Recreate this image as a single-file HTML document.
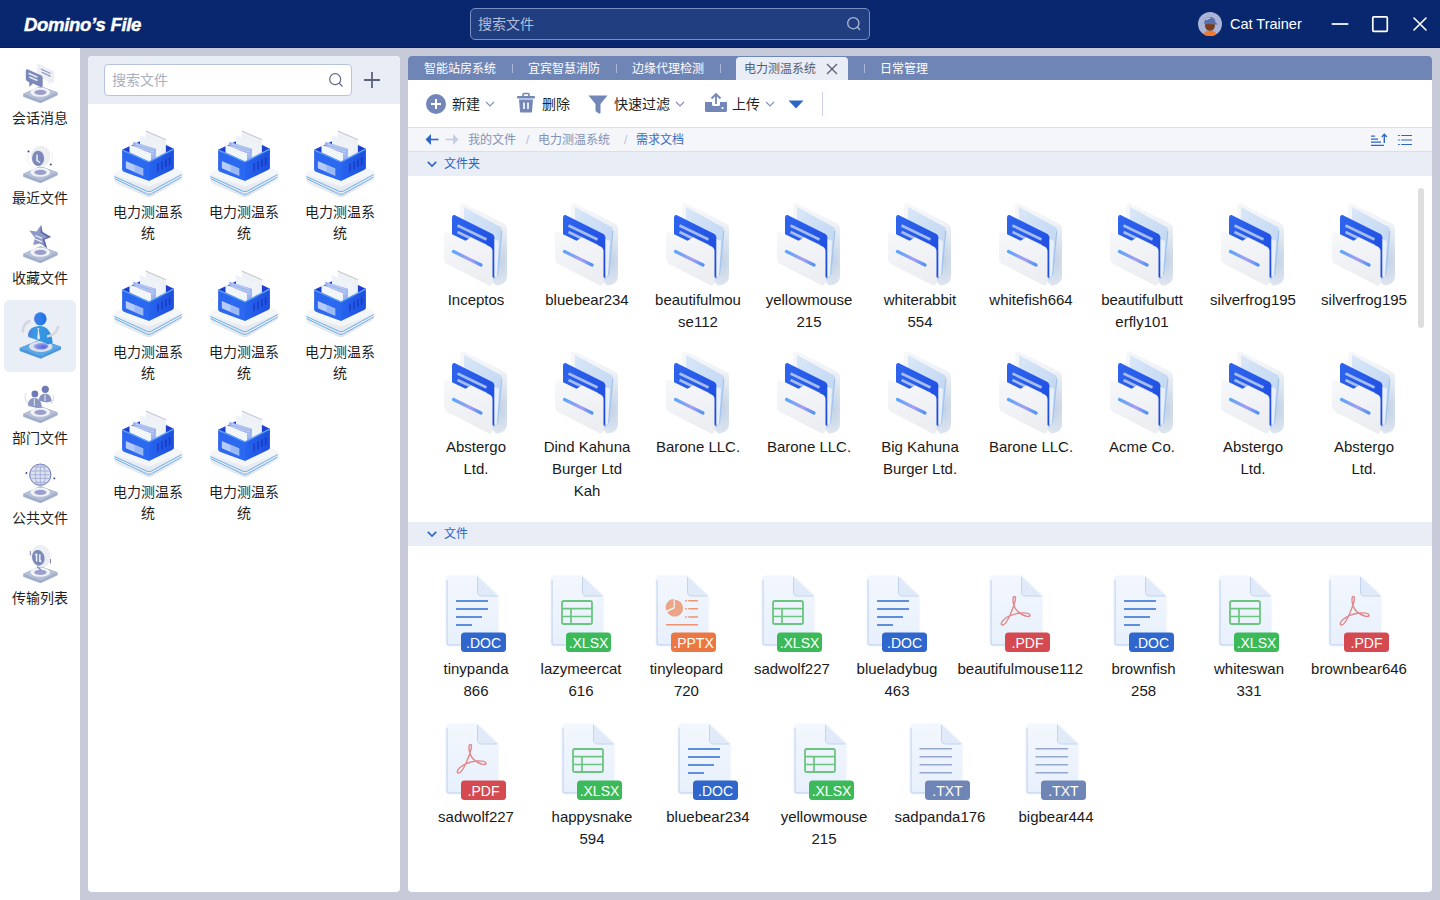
<!DOCTYPE html><html lang="zh-CN"><head><meta charset="utf-8"><style>
*{box-sizing:border-box;margin:0;padding:0}
html,body{width:1440px;height:900px;overflow:hidden;background:#c7cbd9;font-family:"Liberation Sans",sans-serif;color:#1d1d1f}
.a{position:absolute;white-space:nowrap}
svg.a{overflow:visible}
#hdr{position:absolute;left:0;top:0;width:1440px;height:48px;background:#08276e;border-bottom:1px solid #03205f}
#logo{left:24px;top:13px;font-size:18.6px;font-weight:bold;font-style:italic;color:#fff;line-height:24px;letter-spacing:-0.35px;-webkit-text-stroke:0.4px #fff}
#tsearch{position:absolute;left:470px;top:8px;width:400px;height:32px;border:1px solid #7b8fc4;border-radius:5px;background:#213f80}
#side{position:absolute;left:0;top:48px;width:80px;height:852px;background:#fff}
.sel{position:absolute;left:4px;top:300px;width:72px;height:72px;border-radius:5px;background:#eaeef6}
.sl{font-size:14px;line-height:18px;color:#1f1f1f;width:80px;text-align:center;left:0}
#lp{position:absolute;left:88px;top:56px;width:312px;height:836px;background:#fff;border-radius:4px;overflow:hidden}
#lph{position:absolute;left:0;top:0;width:312px;height:48px;background:#e9edf6}
#lsearch{position:absolute;left:104px;top:64px;width:248px;height:32px;border:1px solid #b7c2dc;border-radius:4px;background:#fff}
.ph{font-size:14px;line-height:16px}
.bn{font-size:14px;line-height:21px;color:#1f1f1f;width:96px;text-align:center}
#rp{position:absolute;left:408px;top:56px;width:1024px;height:836px;background:#fff;border-radius:4px;overflow:hidden}
#tabs{position:absolute;left:0;top:0;width:1024px;height:24px;background:#6f85b6}
#acttab{position:absolute;left:328px;top:1px;width:112px;height:23px;background:#e9edf6;border-radius:4px 4px 0 0}
.tb{font-size:12px;line-height:16px;color:#fff}
.tsep{position:absolute;top:64px;width:1px;height:9px;background:#a9b6d6}
#toolbar{position:absolute;left:0;top:24px;width:1024px;height:48px;background:#fff;border-bottom:1px solid #d8e0ef}
.tt{font-size:14px;line-height:20px;color:#1f1f1f}
#crumb{position:absolute;left:0;top:72px;width:1024px;height:24px;background:#f4f6fa;border-bottom:1px solid #d8e0ef}
.cb{font-size:12px;line-height:16px;color:#8492b3}
.sec{position:absolute;left:0;width:1024px;height:24px;background:#e9edf6}
.st{font-size:12px;line-height:16px;color:#2b64c5}
.nm{font-size:15px;line-height:22px;color:#1a1a1a;text-align:center;width:140px}
#sb{position:absolute;left:1418px;top:188px;width:6px;height:140px;border-radius:3px;background:#dedede}
</style></head><body>
<svg width="0" height="0" style="position:absolute"><defs>
<symbol id="folder" viewBox="0 0 72 90">
  <defs>
    <linearGradient id="fgBack" x1="0" y1="0" x2="1" y2="1"><stop offset="0" stop-color="#f6f7f9"/><stop offset="1" stop-color="#eaeef3"/></linearGradient>
    <linearGradient id="fgDoc" x1="0" y1="0" x2="1" y2="1"><stop offset="0" stop-color="#2f66ee"/><stop offset="1" stop-color="#1c49de"/></linearGradient>
    <linearGradient id="fgFront" x1="0" y1="0" x2="0.3" y2="1"><stop offset="0" stop-color="#f7f8fa"/><stop offset="1" stop-color="#eceef2"/></linearGradient>
    <linearGradient id="fgLine" x1="0" y1="0" x2="1" y2="0"><stop offset="0" stop-color="#5aa6fa"/><stop offset="0.6" stop-color="#a79df0"/><stop offset="1" stop-color="#4f93f7"/></linearGradient>
    <linearGradient id="fgSheet" x1="0" y1="0" x2="1" y2="1"><stop offset="0" stop-color="#d9e7f8"/><stop offset="1" stop-color="#bcd3f1"/></linearGradient>
  </defs>
  <radialGradient id="fgShade" cx="0.85" cy="0.7" r="0.45"><stop offset="0" stop-color="#c3d2e6"/><stop offset="1" stop-color="#c3d2e6" stop-opacity="0"/></radialGradient>
  <path d="M20,9 C20,5.5 22,4.5 25,6 L63,25 C66,26.5 67,28 67,31 L67,78 C67,84 62,87.5 56,87.5 L20,50 Z" fill="url(#fgBack)"/>
  <path d="M20,9 C20,5.5 22,4.5 25,6 L63,25 C66,26.5 67,28 67,31 L67,78 C67,84 62,87.5 56,87.5 L20,50 Z" fill="url(#fgShade)"/>
  <path d="M24,9 L60.5,29 C61.5,29.5 62,30.5 62,32 L57.5,77 L54,82 L24,44 Z" fill="url(#fgSheet)"/>
  <path d="M61.8,33 L57.5,77" stroke="#9fc3ef" stroke-width="1.2"/>
  <path d="M12,20 C12,17.5 13.5,16.5 15.5,17.5 L51.5,35.5 C53.5,36.5 54.5,38 54.5,40.5 L54.5,80 L12,60 Z" fill="url(#fgDoc)"/>
  <path d="M17.5,27.5 L46.5,41.5" stroke="#a6bdf0" stroke-width="2.6"/>
  <path d="M17.5,34 L46.5,48" stroke="#a6bdf0" stroke-width="2.6"/>
  <path d="M54.5,41 L59,43 L57,77 L54.5,79.5 Z" fill="#eaf0f9"/>
  <path d="M4,37 C4,34 5.5,33 8,34.2 L25.5,42.8 L31,39.5 L49.5,48.5 C51.5,49.5 52.5,51 52.5,53.5 L52.5,84 C52.5,87 50.5,88.3 48,87 L8,66.5 C5.3,65.2 4,63.5 4,60.5 Z" fill="url(#fgFront)"/>
  <path d="M13.5,53.5 L41,67" stroke="url(#fgLine)" stroke-width="3.2" stroke-linecap="round"/>
</symbol>

<symbol id="basket" viewBox="0 0 76 74">
  <defs>
    <linearGradient id="bkL" x1="0" y1="0" x2="1" y2="1"><stop offset="0" stop-color="#2e66ee"/><stop offset="1" stop-color="#2a6af2"/></linearGradient>
    <linearGradient id="bkR" x1="0" y1="0" x2="1" y2="0"><stop offset="0" stop-color="#2764ee"/><stop offset="1" stop-color="#1f4fdc"/></linearGradient>
    <linearGradient id="bkSide" x1="0" y1="0" x2="0" y2="1"><stop offset="0" stop-color="#eef1f5"/><stop offset="1" stop-color="#e2e6ec"/></linearGradient>
  </defs>
  <path d="M4.2,47.5 L4.7,54.6 C4.8,56 5.5,57 7,57.7 L36,70.5 C37.5,71.2 40.5,71.2 42,70.5 L69.5,55 C71,54.2 71.8,53 71.8,51.5 L71.8,45.6 L39,59.5 Z" fill="url(#bkSide)"/>
  <path d="M4.3,50.5 L36.5,65 C38,65.7 40,65.7 41.5,65 L71.8,48.5" stroke="#5fa8ec" stroke-width="0.9" fill="none"/>
  <path d="M4.5,52.6 L36.5,67.8 C38,68.5 40,68.5 41.5,67.8 L71.8,51" stroke="#5fa8ec" stroke-width="0.9" fill="none"/>
  <path d="M7,45 L34,32.5 C36.5,31.4 40,31.4 42.5,32.5 L69.5,44 C72.5,45.3 72.5,47 69.5,48.5 L42,59.5 C40,60.4 37.5,60.4 35.5,59.5 L7,49.5 C3.8,48.2 3.8,46.5 7,45 Z" fill="#f5f6f8"/>
  <path d="M12.1,23.7 L37,12 C38.5,11.3 40,11.3 41.5,12 L63.9,22.7 L39,35.4 Z" fill="#1d3fcf"/>
  <path d="M35.9,5 L55.9,13.7 L55.9,40 L35.9,32 Z" fill="#edf1f5"/>
  <path d="M35.9,5 L55.9,13.7" stroke="#b8bcc6" stroke-width="0.9"/>
  <path d="M30,9 L51.2,17.4 L51.2,42 L30,34 Z" fill="#eef3f7"/>
  <path d="M23.2,15.8 L45.9,22.7 L45.9,44 L23.2,36 Z" fill="#9fb4ee"/>
  <path d="M26,18 L44,23.5 M26,20.5 L44,26 M26,23 L44,28.5" stroke="#c9d6f6" stroke-width="0.8"/>
  <path d="M19.5,18.5 L41,27.4 L41,46 L19.5,38 Z" fill="#f3f6f9"/>
  <path d="M12.1,25 C12.1,23.8 12.8,23.4 14,23.9 L39,35.4 L39,55.1 L14.5,46 C12.9,45.4 12.1,44.4 12.1,43 Z" fill="url(#bkL)"/>
  <path d="M39,35.4 L62.5,23.3 C63.5,22.8 63.9,23.3 63.9,24.5 L63.9,41.5 C63.9,42.7 63.2,43.5 62,44 L39,55.1 Z" fill="url(#bkR)"/>
  <path d="M12.5,24.2 L39,36 L63.5,23.2" stroke="#5aa2f5" stroke-width="1.3" fill="none" stroke-linejoin="round"/>
  <path d="M15.8,35 L33.2,42.5 L33.2,49.8 L15.8,42.3 Z" fill="#c5d7f7" opacity="0.9"/>
  <path d="M24.5,38.8 L33.2,42.5 L33.2,49.8 L24.5,46 Z" fill="#97b6f2" opacity="0.9"/>
  <path d="M48,37.5 L48,45.3 M52,35.5 L52,43.2 M55.7,33.2 L55.7,40.9 M59.6,31.3 L59.6,39" stroke="#1639c4" stroke-width="1.3"/>
</symbol>
<symbol id="s_chat" viewBox="0 0 48 48">
  <path d="M7.2,33.8 L24.5,26.3 L41.6,32.3 L41.6,35.3 L24.5,43.3 L7.2,36.8 Z" fill="#a2afc9"/>
  <path d="M7.2,33.8 L24.5,26.3 L41.6,32.3 L24.5,40.3 Z" fill="#b5c0d7"/>
  <ellipse cx="24.2" cy="32.2" rx="9.8" ry="4.5" fill="#f1f3f6"/>
  <ellipse cx="24.4" cy="32.4" rx="6" ry="2.7" fill="#9c9fcc"/>

  <path d="M21.3,5.5 C21.3,4.2 22.2,3.6 23.5,4.2 L36.5,10.5 C37.6,11 38.2,11.8 38.2,13 L38.2,21.5 C38.2,22.6 37.3,23.2 36.3,22.7 L35,22.2 L33.8,25.3 L31.5,21 L23.2,17 C22,16.5 21.3,15.6 21.3,14.4 Z" fill="#edeff3"/>
  <path d="M25,9 L34.5,13.5 M25.5,12 L34.5,16.3" stroke="#8f98c8" stroke-width="1.3"/>
  <path d="M9.8,11 C9.8,9.7 10.8,9 12,9.5 L24.8,15.3 C26,15.8 26.7,16.7 26.7,18 L26.7,25.5 C26.7,26.8 25.7,27.4 24.5,26.9 L17,23.6 L13.3,27.1 L13.3,22.2 L11.8,21.5 C10.5,20.9 9.8,20 9.8,18.8 Z" fill="#7b88ba"/>
  <path d="M12.5,13.3 L21.5,17.3 M13.3,17 L21.5,20.6" stroke="#e4e8f2" stroke-width="1.6"/>
</symbol><symbol id="s_clock" viewBox="0 0 48 48">
  <path d="M7.2,33.8 L24.5,26.3 L41.6,32.3 L41.6,35.3 L24.5,43.3 L7.2,36.8 Z" fill="#a2afc9"/>
  <path d="M7.2,33.8 L24.5,26.3 L41.6,32.3 L24.5,40.3 Z" fill="#b5c0d7"/>
  <ellipse cx="24.2" cy="32.2" rx="9.8" ry="4.5" fill="#f1f3f6"/>
  <ellipse cx="24.4" cy="32.4" rx="6" ry="2.7" fill="#9c9fcc"/>

  <ellipse cx="24.7" cy="16.3" rx="9.8" ry="10.6" fill="#eceef2"/>
  <ellipse cx="22.1" cy="18.4" rx="6.1" ry="7.7" fill="#7c89bb"/>
  <path d="M21,14.5 L21,20.5 L24,22.5" stroke="#eef0f6" stroke-width="1.5" fill="none"/>
  <path d="M11.5,14 C10.5,18 12,23 15,25 M35,12 C37,15 37,21 35,24" stroke="#e5e7ec" stroke-width="0.7" fill="none"/>
  <circle cx="12.5" cy="11.5" r="1" fill="#3b3f8a"/><circle cx="34.7" cy="24.5" r="1" fill="#3b3f8a"/>
</symbol><symbol id="s_star" viewBox="0 0 48 48">
  <path d="M7.2,33.8 L24.5,26.3 L41.6,32.3 L41.6,35.3 L24.5,43.3 L7.2,36.8 Z" fill="#a2afc9"/>
  <path d="M7.2,33.8 L24.5,26.3 L41.6,32.3 L24.5,40.3 Z" fill="#b5c0d7"/>
  <ellipse cx="24.2" cy="32.2" rx="9.8" ry="4.5" fill="#f1f3f6"/>
  <ellipse cx="24.4" cy="32.4" rx="6" ry="2.7" fill="#9c9fcc"/>

  <path d="M25,5 L26.5,12 L35,17 L28.5,19.5 L31,28.3 L24,23.5 L17,25 L19,18 L13.3,10.4 L20.5,11.5 Z" fill="#8e98c6"/>
  <path d="M25,5 L26.5,12 L35,17 L28.5,19.5 L31,28.3 L28.5,26 L27,19 L31.5,17 L24.5,12.5 Z" fill="#5d68ad"/>
  <path d="M19.2,15.5 L26,18.3 M19.2,19 L26,21.8" stroke="#eef0f8" stroke-width="1.3"/>
</symbol><symbol id="s_dept" viewBox="0 0 48 48">
  <path d="M7.2,33.8 L24.5,26.3 L41.6,32.3 L41.6,35.3 L24.5,43.3 L7.2,36.8 Z" fill="#a2afc9"/>
  <path d="M7.2,33.8 L24.5,26.3 L41.6,32.3 L24.5,40.3 Z" fill="#b5c0d7"/>
  <ellipse cx="24.2" cy="32.2" rx="9.8" ry="4.5" fill="#f1f3f6"/>
  <ellipse cx="24.4" cy="32.4" rx="6" ry="2.7" fill="#9c9fcc"/>

  <path d="M10,13 C8.5,17 9.5,21 12,23.5 M37,15 C38.5,18 37.5,22 34.5,24" stroke="#e3e5ea" stroke-width="1.5" fill="none"/>
  <circle cx="29.3" cy="9.3" r="3.6" fill="#6e7cb6"/>
  <path d="M23,20 C23,16 25.5,13.8 29.5,13.8 C33,13.8 35.3,16.5 35.7,21.3 L31,22.5 L23.5,21 Z" fill="#8794c2"/>
  <path d="M28.5,14.5 L29.5,14.5 L29.5,21 L28.5,21 Z" fill="#e8eaf2"/>
  <circle cx="18.9" cy="13.9" r="3.4" fill="#6e7cb6"/>
  <path d="M12,25 C12,20.5 14.5,17.9 18.5,17.9 C22.5,17.9 25.5,21 26,27.7 L21,28 L12.5,26 Z" fill="#8c98c4"/>
  <path d="M17.8,18.5 L18.8,18.5 L18.8,26 L17.8,26 Z" fill="#e8eaf2"/>
</symbol><symbol id="s_globe" viewBox="0 0 48 48">
  <path d="M7.2,33.8 L24.5,26.3 L41.6,32.3 L41.6,35.3 L24.5,43.3 L7.2,36.8 Z" fill="#a2afc9"/>
  <path d="M7.2,33.8 L24.5,26.3 L41.6,32.3 L24.5,40.3 Z" fill="#b5c0d7"/>
  <ellipse cx="24.2" cy="32.2" rx="9.8" ry="4.5" fill="#f1f3f6"/>
  <ellipse cx="24.4" cy="32.4" rx="6" ry="2.7" fill="#9c9fcc"/>

  <circle cx="24.3" cy="14.7" r="11" fill="#dde2ef"/>
  <circle cx="24.3" cy="14.7" r="10.6" fill="none" stroke="#6c78b6" stroke-width="1"/>
  <path d="M14,11 L34.5,11 M13.7,14.7 L35,14.7 M14,18.4 L34.5,18.4 M17,7 L31.5,7 M17,22.4 L31.5,22.4" stroke="#9ba6d2" stroke-width="0.8"/>
  <ellipse cx="24.3" cy="14.7" rx="5" ry="10.6" fill="none" stroke="#9ba6d2" stroke-width="0.8"/>
  <path d="M24.3,4 L24.3,25.3" stroke="#9ba6d2" stroke-width="0.8"/>
  <path d="M10.5,12 C11,16 13,19 15,20 M38,17 C37.5,19 36,21 33,22" stroke="#e3e5ea" stroke-width="0.6" fill="none"/>
  <circle cx="10.4" cy="13" r="0.9" fill="#3b3f8a"/><circle cx="38.4" cy="18.4" r="0.9" fill="#3b3f8a"/>
</symbol><symbol id="s_trans" viewBox="0 0 48 48">
  <path d="M7.2,33.8 L24.5,26.3 L41.6,32.3 L41.6,35.3 L24.5,43.3 L7.2,36.8 Z" fill="#a2afc9"/>
  <path d="M7.2,33.8 L24.5,26.3 L41.6,32.3 L24.5,40.3 Z" fill="#b5c0d7"/>
  <ellipse cx="24.2" cy="32.2" rx="9.8" ry="4.5" fill="#f1f3f6"/>
  <ellipse cx="24.4" cy="32.4" rx="6" ry="2.7" fill="#9c9fcc"/>

  <ellipse cx="25" cy="16" rx="9.6" ry="11.4" fill="#eceef2" transform="rotate(-18 25 16)"/>
  <ellipse cx="22.3" cy="17.8" rx="6.2" ry="7.9" fill="#7c89bb" transform="rotate(-12 22.3 17.8)"/>
  <path d="M20.6,13.8 L20.6,21.5 M23.8,14.3 L23.8,22 M19.2,15.3 L20.6,13.8 M23.8,22 L25.2,20.5" stroke="#eef0f6" stroke-width="1.5" fill="none"/>
  <path d="M14.3,11 L14.3,15.5 M34.5,19 L34.5,23.5" stroke="#6f78b0" stroke-width="0.9"/>
  <path d="M21,26.5 L25,30" stroke="#7c89bb" stroke-width="1.2"/>
</symbol><symbol id="s_person" viewBox="0 0 56 60">
  <defs>
    <radialGradient id="prIn" cx="0.65" cy="0.6" r="0.7"><stop offset="0" stop-color="#5a5fe0"/><stop offset="1" stop-color="#9fb0ee"/></radialGradient>
    <linearGradient id="prBody" x1="0" y1="0" x2="1" y2="0"><stop offset="0" stop-color="#4d7de2"/><stop offset="0.25" stop-color="#3a9ae2"/><stop offset="1" stop-color="#2f8fe0"/></linearGradient>
    <linearGradient id="prHead" x1="0" y1="0" x2="1" y2="0"><stop offset="0" stop-color="#5575e0"/><stop offset="0.35" stop-color="#3380e8"/><stop offset="1" stop-color="#1d6fe6"/></linearGradient>
  </defs>
  <path d="M7.7,42 L28.7,33.3 L49,40.7 L49,43.5 L28.7,52.7 L7.7,45 Z" fill="#4c97dc"/>
  <path d="M7.7,42 L28.7,33.3 L49,40.7 L28.7,50 Z" fill="#5ea8e6"/>
  <ellipse cx="28.7" cy="40.5" rx="11.7" ry="5.4" fill="#dde2ea"/>
  <ellipse cx="29" cy="40.3" rx="7.2" ry="3.3" fill="url(#prIn)"/>
  <path d="M16,30 C16,23.5 21,20 27.5,20 C34.5,20 40,25.5 40.7,37 L36,38.5 L28,35 L16.5,31 Z" fill="url(#prBody)"/>
  <ellipse cx="28.3" cy="12.8" rx="6.3" ry="6.6" fill="url(#prHead)"/>
  <path d="M25,22.5 L27.5,22 L26.8,24 L28,32 L26.5,34 L25.2,32 L26,24 Z" fill="#e4e7ee"/>
  <path d="M18.5,14.5 C13,16.5 10.5,21 11,26.5" stroke="#d3d6dc" stroke-width="2.6" fill="none"/>
  <path d="M46,20 C46,25 42,29.5 35,30.5" stroke="#d6d8dd" stroke-width="2.6" fill="none"/>
</symbol><filter id="pgBlur" x="-20%" y="-20%" width="140%" height="140%"><feGaussianBlur stdDeviation="1.2"/></filter><symbol id="f_doc" viewBox="0 0 72 86">
  <defs><linearGradient id="pg_f_doc" x1="0" y1="0" x2="0" y2="1"><stop offset="0" stop-color="#f3f7fe"/><stop offset="1" stop-color="#e7f0fc"/></linearGradient></defs>
  <path d="M6.5,9 C6.5,7.3 7.3,6.5 9,6.5 L37.5,6.5 L58,26 L58,73 C58,74.7 57.2,75.5 55.5,75.5 L9,75.5 C7.3,75.5 6.5,74.7 6.5,73 Z" fill="#c9d6ee" opacity="0.55" filter="url(#pgBlur)"/>
  <path d="M6.5,9 C6.5,7.3 7.3,6.5 9,6.5 L37.5,6.5 L58,26 L58,73 C58,74.7 57.2,75.5 55.5,75.5 L9,75.5 C7.3,75.5 6.5,74.7 6.5,73 Z" fill="url(#pg_f_doc)"/>
  <path d="M7.1,10 L7.1,73 C7.1,74.2 7.8,74.9 9,74.9 L56,74.9" stroke="#c6d8f3" stroke-width="1.2" fill="none"/>
  <path d="M37.5,6.5 L37.5,22 C37.5,24.5 39,26 41.5,26 L58,26 Z" fill="#e1eaf8"/>
  <path d="M37.5,7 L37.5,22 C37.5,24.5 39,26 41.5,26 L57.5,26" stroke="#c4d4ee" stroke-width="1" fill="none"/>
  <path d="M16,31 L48,31 M16,39 L48,39 M16,47 L42,47 M16,55 L32,55" stroke="#5d8fdd" stroke-width="2"/>
  <rect x="21" y="62.5" width="45" height="19.5" rx="3.5" fill="#2f67cc"/>
  <text x="43.5" y="77.5" text-anchor="middle" font-family="Liberation Sans, sans-serif" font-size="14" fill="#fff">.DOC</text>
</symbol><symbol id="f_xls" viewBox="0 0 72 86">
  <defs><linearGradient id="pg_f_xls" x1="0" y1="0" x2="0" y2="1"><stop offset="0" stop-color="#f3f7fe"/><stop offset="1" stop-color="#e7f0fc"/></linearGradient></defs>
  <path d="M6.5,9 C6.5,7.3 7.3,6.5 9,6.5 L37.5,6.5 L58,26 L58,73 C58,74.7 57.2,75.5 55.5,75.5 L9,75.5 C7.3,75.5 6.5,74.7 6.5,73 Z" fill="#c9d6ee" opacity="0.55" filter="url(#pgBlur)"/>
  <path d="M6.5,9 C6.5,7.3 7.3,6.5 9,6.5 L37.5,6.5 L58,26 L58,73 C58,74.7 57.2,75.5 55.5,75.5 L9,75.5 C7.3,75.5 6.5,74.7 6.5,73 Z" fill="url(#pg_f_xls)"/>
  <path d="M7.1,10 L7.1,73 C7.1,74.2 7.8,74.9 9,74.9 L56,74.9" stroke="#c6d8f3" stroke-width="1.2" fill="none"/>
  <path d="M37.5,6.5 L37.5,22 C37.5,24.5 39,26 41.5,26 L58,26 Z" fill="#e1eaf8"/>
  <path d="M37.5,7 L37.5,22 C37.5,24.5 39,26 41.5,26 L57.5,26" stroke="#c4d4ee" stroke-width="1" fill="none"/>
  <rect x="17" y="31" width="30" height="23" rx="1.8" fill="none" stroke="#6cc57e" stroke-width="1.8"/><path d="M17,38.7 L47,38.7 M17,46.5 L47,46.5 M26,38.7 L26,54" stroke="#6cc57e" stroke-width="1.7"/>
  <rect x="21" y="62.5" width="45" height="19.5" rx="3.5" fill="#3cba59"/>
  <text x="43.5" y="77.5" text-anchor="middle" font-family="Liberation Sans, sans-serif" font-size="14" fill="#fff">.XLSX</text>
</symbol><symbol id="f_ppt" viewBox="0 0 72 86">
  <defs><linearGradient id="pg_f_ppt" x1="0" y1="0" x2="0" y2="1"><stop offset="0" stop-color="#f3f7fe"/><stop offset="1" stop-color="#e7f0fc"/></linearGradient></defs>
  <path d="M6.5,9 C6.5,7.3 7.3,6.5 9,6.5 L37.5,6.5 L58,26 L58,73 C58,74.7 57.2,75.5 55.5,75.5 L9,75.5 C7.3,75.5 6.5,74.7 6.5,73 Z" fill="#c9d6ee" opacity="0.55" filter="url(#pgBlur)"/>
  <path d="M6.5,9 C6.5,7.3 7.3,6.5 9,6.5 L37.5,6.5 L58,26 L58,73 C58,74.7 57.2,75.5 55.5,75.5 L9,75.5 C7.3,75.5 6.5,74.7 6.5,73 Z" fill="url(#pg_f_ppt)"/>
  <path d="M7.1,10 L7.1,73 C7.1,74.2 7.8,74.9 9,74.9 L56,74.9" stroke="#c6d8f3" stroke-width="1.2" fill="none"/>
  <path d="M37.5,6.5 L37.5,22 C37.5,24.5 39,26 41.5,26 L58,26 Z" fill="#e1eaf8"/>
  <path d="M37.5,7 L37.5,22 C37.5,24.5 39,26 41.5,26 L57.5,26" stroke="#c4d4ee" stroke-width="1" fill="none"/>
  <path d="M24.8,38.2 L24.8,29.8 A8.4,8.4 0 1 1 17.2,42 Z" fill="#eda587"/><path d="M23.6,37.2 L16.3,40.6 A8.4,8.4 0 0 1 23.6,29 Z" fill="#eda587"/><path d="M35.2,30.7 L36.8,30.7 M35.2,38.7 L36.8,38.7 M35.2,46.9 L36.8,46.9 M38.3,30.7 L48,30.7 M38.3,38.7 L48,38.7 M38.3,46.9 L48,46.9 M16,54.8 L48,54.8" stroke="#ee9470" stroke-width="1.5"/>
  <rect x="21" y="62.5" width="45" height="19.5" rx="3.5" fill="#eb7843"/>
  <text x="43.5" y="77.5" text-anchor="middle" font-family="Liberation Sans, sans-serif" font-size="14" fill="#fff">.PPTX</text>
</symbol><symbol id="f_pdf" viewBox="0 0 72 86">
  <defs><linearGradient id="pg_f_pdf" x1="0" y1="0" x2="0" y2="1"><stop offset="0" stop-color="#f3f7fe"/><stop offset="1" stop-color="#e7f0fc"/></linearGradient></defs>
  <path d="M6.5,9 C6.5,7.3 7.3,6.5 9,6.5 L37.5,6.5 L58,26 L58,73 C58,74.7 57.2,75.5 55.5,75.5 L9,75.5 C7.3,75.5 6.5,74.7 6.5,73 Z" fill="#c9d6ee" opacity="0.55" filter="url(#pgBlur)"/>
  <path d="M6.5,9 C6.5,7.3 7.3,6.5 9,6.5 L37.5,6.5 L58,26 L58,73 C58,74.7 57.2,75.5 55.5,75.5 L9,75.5 C7.3,75.5 6.5,74.7 6.5,73 Z" fill="url(#pg_f_pdf)"/>
  <path d="M7.1,10 L7.1,73 C7.1,74.2 7.8,74.9 9,74.9 L56,74.9" stroke="#c6d8f3" stroke-width="1.2" fill="none"/>
  <path d="M37.5,6.5 L37.5,22 C37.5,24.5 39,26 41.5,26 L58,26 Z" fill="#e1eaf8"/>
  <path d="M37.5,7 L37.5,22 C37.5,24.5 39,26 41.5,26 L57.5,26" stroke="#c4d4ee" stroke-width="1" fill="none"/>
  <path d="M30.5,26.5 C28.5,26.5 28.8,31 29.5,34 C30.5,38 33,42 38,44.5 C41,46 45.5,47.5 46,45.5 C46.5,43.5 42,42.5 37,43 C31,43.6 24,46 20,49.5 C17,52 16.5,55 18.5,55 C20.5,55 23.5,51 26.5,44 C29,38 31.5,31 31.5,28 C31.5,27 31,26.5 30.5,26.5 Z" fill="none" stroke="#e0898d" stroke-width="1.4"/>
  <rect x="21" y="62.5" width="45" height="19.5" rx="3.5" fill="#d54a50"/>
  <text x="43.5" y="77.5" text-anchor="middle" font-family="Liberation Sans, sans-serif" font-size="14" fill="#fff">.PDF</text>
</symbol><symbol id="f_txt" viewBox="0 0 72 86">
  <defs><linearGradient id="pg_f_txt" x1="0" y1="0" x2="0" y2="1"><stop offset="0" stop-color="#f3f7fe"/><stop offset="1" stop-color="#e7f0fc"/></linearGradient></defs>
  <path d="M6.5,9 C6.5,7.3 7.3,6.5 9,6.5 L37.5,6.5 L58,26 L58,73 C58,74.7 57.2,75.5 55.5,75.5 L9,75.5 C7.3,75.5 6.5,74.7 6.5,73 Z" fill="#c9d6ee" opacity="0.55" filter="url(#pgBlur)"/>
  <path d="M6.5,9 C6.5,7.3 7.3,6.5 9,6.5 L37.5,6.5 L58,26 L58,73 C58,74.7 57.2,75.5 55.5,75.5 L9,75.5 C7.3,75.5 6.5,74.7 6.5,73 Z" fill="url(#pg_f_txt)"/>
  <path d="M7.1,10 L7.1,73 C7.1,74.2 7.8,74.9 9,74.9 L56,74.9" stroke="#c6d8f3" stroke-width="1.2" fill="none"/>
  <path d="M37.5,6.5 L37.5,22 C37.5,24.5 39,26 41.5,26 L58,26 Z" fill="#e1eaf8"/>
  <path d="M37.5,7 L37.5,22 C37.5,24.5 39,26 41.5,26 L57.5,26" stroke="#c4d4ee" stroke-width="1" fill="none"/>
  <path d="M15.5,30.8 L48,30.8 M15.5,38.8 L48,38.8 M15.5,46.8 L48,46.8 M15.5,54.8 L48,54.8" stroke="#97a8d0" stroke-width="1.6"/>
  <rect x="21" y="62.5" width="45" height="19.5" rx="3.5" fill="#6f85b6"/>
  <text x="43.5" y="77.5" text-anchor="middle" font-family="Liberation Sans, sans-serif" font-size="14" fill="#fff">.TXT</text>
</symbol></defs></svg>
<div id="hdr"></div>
<div id="logo" class="a">Domino’s File</div>
<div id="tsearch"></div>
<div class="a ph" style="left:478px;top:16px;color:#b3bddb">搜索文件</div>
<svg class="a" style="left:845px;top:15px" width="16" height="16" viewBox="0 0 16 16"><circle cx="8.3" cy="8.2" r="5.6" fill="none" stroke="#aeb9db" stroke-width="1.3"/><path d="M12.4,12.3 L14.6,14.5" stroke="#aeb9db" stroke-width="1.3" stroke-linecap="round"/></svg>
<svg class="a" style="left:1198px;top:12px" width="24" height="24" viewBox="0 0 24 24">
<circle cx="12" cy="12" r="12" fill="#aab4d8"/>
<clipPath id="avc"><circle cx="12" cy="12" r="12"/></clipPath>
<g clip-path="url(#avc)">
<path d="M5,24 C6,19.5 9,18.5 12,18.5 C15,18.5 18,19.5 19,24 Z" fill="#f07a35"/>
<ellipse cx="12" cy="13.5" rx="5" ry="5.2" fill="#7a3d1d"/>
<path d="M6.3,11.5 C6.3,7 9,5 12,5 C15.5,5 17.5,7.5 17.5,10.5 L20,12.5 L6.5,12 Z" fill="#5a6fa8"/>
<path d="M8,8 C9,6.5 11,6 12.5,6.2" stroke="#c9d3f0" stroke-width="1.2" fill="none"/>
</g></svg>
<div class="a" style="left:1230px;top:15px;font-size:14.5px;line-height:18px;color:#fff">Cat Trainer</div>
<svg class="a" style="left:1330px;top:14px" width="100" height="20" viewBox="0 0 100 20"><path d="M1.7,10 L18.3,10" stroke="#dfe3ef" stroke-width="2"/><rect x="42.8" y="2.8" width="14.5" height="14.5" rx="1" fill="none" stroke="#fff" stroke-width="1.7"/><path d="M84,4 L96,16 M96,4 L84,16" stroke="#fff" stroke-width="1.6" stroke-linecap="round"/></svg>
<div id="side"></div>
<div class="sel"></div>
<svg class="a" style="left:16px;top:60px" width="48" height="48"><use href="#s_chat"/></svg>
<div class="a sl" style="top:109px">会话消息</div>
<svg class="a" style="left:16px;top:140px" width="48" height="48"><use href="#s_clock"/></svg>
<div class="a sl" style="top:189px">最近文件</div>
<svg class="a" style="left:16px;top:220px" width="48" height="48"><use href="#s_star"/></svg>
<div class="a sl" style="top:269px">收藏文件</div>
<svg class="a" style="left:12px;top:306px" width="56" height="60"><use href="#s_person"/></svg>
<svg class="a" style="left:16px;top:380px" width="48" height="48"><use href="#s_dept"/></svg>
<div class="a sl" style="top:429px">部门文件</div>
<svg class="a" style="left:16px;top:460px" width="48" height="48"><use href="#s_globe"/></svg>
<div class="a sl" style="top:509px">公共文件</div>
<svg class="a" style="left:16px;top:540px" width="48" height="48"><use href="#s_trans"/></svg>
<div class="a sl" style="top:589px">传输列表</div>
<div id="lp"><div id="lph"></div></div>
<div id="lsearch"></div>
<div class="a ph" style="left:112px;top:72px;color:#a8afbf">搜索文件</div>
<svg class="a" style="left:327px;top:71px" width="16" height="16" viewBox="0 0 16 16"><circle cx="8.2" cy="8.2" r="5.5" fill="none" stroke="#5d6788" stroke-width="1.2"/><path d="M12.2,12.2 L15,15" stroke="#5d6788" stroke-width="1.2" stroke-linecap="round"/></svg>
<svg class="a" style="left:362px;top:70px" width="20" height="20" viewBox="0 0 20 20"><path d="M10,2 L10,18 M2,10 L18,10" stroke="#5a6379" stroke-width="1.8"/></svg>
<svg class="a" style="left:110px;top:126px" width="76" height="74"><use href="#basket"/></svg>
<div class="a bn" style="left:100px;top:202px">电力测温系<br>统</div>
<svg class="a" style="left:206px;top:126px" width="76" height="74"><use href="#basket"/></svg>
<div class="a bn" style="left:196px;top:202px">电力测温系<br>统</div>
<svg class="a" style="left:302px;top:126px" width="76" height="74"><use href="#basket"/></svg>
<div class="a bn" style="left:292px;top:202px">电力测温系<br>统</div>
<svg class="a" style="left:110px;top:266px" width="76" height="74"><use href="#basket"/></svg>
<div class="a bn" style="left:100px;top:342px">电力测温系<br>统</div>
<svg class="a" style="left:206px;top:266px" width="76" height="74"><use href="#basket"/></svg>
<div class="a bn" style="left:196px;top:342px">电力测温系<br>统</div>
<svg class="a" style="left:302px;top:266px" width="76" height="74"><use href="#basket"/></svg>
<div class="a bn" style="left:292px;top:342px">电力测温系<br>统</div>
<svg class="a" style="left:110px;top:406px" width="76" height="74"><use href="#basket"/></svg>
<div class="a bn" style="left:100px;top:482px">电力测温系<br>统</div>
<svg class="a" style="left:206px;top:406px" width="76" height="74"><use href="#basket"/></svg>
<div class="a bn" style="left:196px;top:482px">电力测温系<br>统</div>
<div id="rp"><div id="tabs"></div><div id="toolbar"></div><div id="crumb"></div><div class="sec" style="top:96px"></div><div class="sec" style="top:466px"></div></div>
<div class="a" style="left:736px;top:57px;width:112px;height:23px;background:#e9edf6;border-radius:4px 4px 0 0"></div>
<div class="a tb" style="left:424px;top:61px">智能站房系统</div>
<div class="a tb" style="left:528px;top:61px">宜宾智慧消防</div>
<div class="a tb" style="left:632px;top:61px">边缘代理检测</div>
<div class="a tb" style="left:880px;top:61px">日常管理</div>
<div class="a tb" style="left:744px;top:61px;color:#555d72">电力测温系统</div>
<svg class="a" style="left:826px;top:63px" width="12" height="12" viewBox="0 0 12 12"><path d="M1,1 L11,11 M11,1 L1,11" stroke="#555d72" stroke-width="1.2"/></svg>
<div class="tsep" style="left:512px"></div>
<div class="tsep" style="left:616px"></div>
<div class="tsep" style="left:720px"></div>
<div class="tsep" style="left:864px"></div>
<svg class="a" style="left:426px;top:94px" width="20" height="20" viewBox="0 0 20 20"><circle cx="10" cy="10" r="10" fill="#7286b8"/><path d="M10,5 L10,15 M5,10 L15,10" stroke="#fff" stroke-width="2"/></svg>
<div class="a tt" style="left:452px;top:94px">新建</div>
<svg class="a" style="left:485px;top:101px" width="10" height="6" viewBox="0 0 10 6"><path d="M1,1 L5,5 L9,1" stroke="#8494c0" stroke-width="1.2" fill="none"/></svg>
<svg class="a" style="left:517px;top:93px" width="18" height="20" viewBox="0 0 18 20"><path d="M6,3 L6,1.5 C6,1 6.5,0.5 7,0.5 L11,0.5 C11.5,0.5 12,1 12,1.5 L12,3" stroke="#7286b8" stroke-width="1.6" fill="none"/><rect x="0" y="3" width="18" height="2.5" rx="1" fill="#7286b8"/><path d="M2,6.5 L16,6.5 L15,18.5 C15,19.2 14.5,19.6 13.8,19.6 L4.2,19.6 C3.5,19.6 3,19.2 3,18.5 Z" fill="#7286b8"/><path d="M7,9.5 L7,16 M11,9.5 L11,16" stroke="#fff" stroke-width="1.6"/></svg>
<div class="a tt" style="left:542px;top:94px">删除</div>
<svg class="a" style="left:588px;top:95px" width="20" height="19" viewBox="0 0 20 19"><path d="M0.5,0.5 L19.5,0.5 L12.5,9 L12.5,17.5 C12.5,18.5 11.5,19 10.5,18.3 L8,16.5 C7.5,16.2 7.5,15.8 7.5,15 L7.5,9 Z" fill="#7286b8"/></svg>
<div class="a tt" style="left:614px;top:94px">快速过滤</div>
<svg class="a" style="left:675px;top:101px" width="10" height="6" viewBox="0 0 10 6"><path d="M1,1 L5,5 L9,1" stroke="#8494c0" stroke-width="1.2" fill="none"/></svg>
<svg class="a" style="left:705px;top:93px" width="22" height="19" viewBox="0 0 22 19"><path d="M0,9 L7,9 L7,11.5 C7,12.3 7.7,13 8.5,13 L13.5,13 C14.3,13 15,12.3 15,11.5 L15,9 L22,9 L22,17.5 C22,18.3 21.3,19 20.5,19 L1.5,19 C0.7,19 0,18.3 0,17.5 Z" fill="#7286b8"/><path d="M11,11 L11,1.5 M6.5,5.5 L11,1 L15.5,5.5" stroke="#7286b8" stroke-width="1.8" fill="none"/><circle cx="17.5" cy="15" r="1.1" fill="#fff"/></svg>
<div class="a tt" style="left:732px;top:94px">上传</div>
<svg class="a" style="left:765px;top:101px" width="10" height="6" viewBox="0 0 10 6"><path d="M1,1 L5,5 L9,1" stroke="#8494c0" stroke-width="1.2" fill="none"/></svg>
<svg class="a" style="left:788px;top:100px" width="16" height="9" viewBox="0 0 16 9"><path d="M0.5,0.5 L15.5,0.5 L8,8.5 Z" fill="#2d66c8"/></svg>
<div class="a" style="left:822px;top:92px;width:1px;height:24px;background:#c9d2e6"></div>
<svg class="a" style="left:425px;top:133px" width="14" height="13" viewBox="0 0 14 13"><path d="M0.5,6.5 L6,1 L6,12 Z" fill="#2f67c9"/><path d="M5,6.5 L13.5,6.5" stroke="#2f67c9" stroke-width="1.6"/></svg>
<svg class="a" style="left:445px;top:133px" width="14" height="13" viewBox="0 0 14 13"><path d="M13.5,6.5 L8,1 L8,12 Z" fill="#c3cee5"/><path d="M0.5,6.5 L9,6.5" stroke="#c3cee5" stroke-width="1.6"/></svg>
<div class="a cb" style="left:468px;top:132px">我的文件</div>
<div class="a cb" style="left:526px;top:132px;color:#b7c1d8">/</div>
<div class="a cb" style="left:538px;top:132px">电力测温系统</div>
<div class="a cb" style="left:624px;top:132px;color:#b7c1d8">/</div>
<div class="a cb" style="left:636px;top:132px;color:#3b6cc4">需求文档</div>
<svg class="a" style="left:1370px;top:133px" width="18" height="14" viewBox="0 0 18 14"><path d="M1,3.1 L5,3.1 M1,6.2 L8,6.2 M1,9.2 L11,9.2 M1,12.3 L14,12.3" stroke="#2f67c9" stroke-width="1.3"/><path d="M14.3,1.5 L14.3,10" stroke="#2f67c9" stroke-width="1.4"/><path d="M11.8,4 L14.3,1.3 L16.8,4" stroke="#2f67c9" stroke-width="1.4" fill="none"/></svg>
<svg class="a" style="left:1397px;top:133px" width="16" height="14" viewBox="0 0 16 14"><path d="M1,2.5 L2.8,2.5 M1,7 L2.8,7 M1,11.5 L2.8,11.5 M4.2,2.5 L15,2.5 M4.2,7 L15,7 M4.2,11.5 L15,11.5" stroke="#2f67c9" stroke-width="1.2"/></svg>
<svg class="a" style="left:427px;top:161px" width="10" height="7" viewBox="0 0 10 7"><path d="M0.8,0.8 L5,5 L9.2,0.8" stroke="#2f67c9" stroke-width="1.7" fill="none"/></svg>
<div class="a st" style="left:444px;top:156px">文件夹</div>
<svg class="a" style="left:427px;top:531px" width="10" height="7" viewBox="0 0 10 7"><path d="M0.8,0.8 L5,5 L9.2,0.8" stroke="#2f67c9" stroke-width="1.7" fill="none"/></svg>
<div class="a st" style="left:444px;top:526px">文件</div>
<svg class="a" style="left:440px;top:198px" width="72" height="90"><use href="#folder"/></svg>
<div class="a nm" style="left:406px;top:289px">Inceptos</div>
<svg class="a" style="left:551px;top:198px" width="72" height="90"><use href="#folder"/></svg>
<div class="a nm" style="left:517px;top:289px">bluebear234</div>
<svg class="a" style="left:662px;top:198px" width="72" height="90"><use href="#folder"/></svg>
<div class="a nm" style="left:628px;top:289px">beautifulmou<br>se112</div>
<svg class="a" style="left:773px;top:198px" width="72" height="90"><use href="#folder"/></svg>
<div class="a nm" style="left:739px;top:289px">yellowmouse<br>215</div>
<svg class="a" style="left:884px;top:198px" width="72" height="90"><use href="#folder"/></svg>
<div class="a nm" style="left:850px;top:289px">whiterabbit<br>554</div>
<svg class="a" style="left:995px;top:198px" width="72" height="90"><use href="#folder"/></svg>
<div class="a nm" style="left:961px;top:289px">whitefish664</div>
<svg class="a" style="left:1106px;top:198px" width="72" height="90"><use href="#folder"/></svg>
<div class="a nm" style="left:1072px;top:289px">beautifulbutt<br>erfly101</div>
<svg class="a" style="left:1217px;top:198px" width="72" height="90"><use href="#folder"/></svg>
<div class="a nm" style="left:1183px;top:289px">silverfrog195</div>
<svg class="a" style="left:1328px;top:198px" width="72" height="90"><use href="#folder"/></svg>
<div class="a nm" style="left:1294px;top:289px">silverfrog195</div>
<svg class="a" style="left:440px;top:346px" width="72" height="90"><use href="#folder"/></svg>
<div class="a nm" style="left:406px;top:436px">Abstergo<br>Ltd.</div>
<svg class="a" style="left:551px;top:346px" width="72" height="90"><use href="#folder"/></svg>
<div class="a nm" style="left:517px;top:436px">Dind Kahuna<br>Burger Ltd<br>Kah</div>
<svg class="a" style="left:662px;top:346px" width="72" height="90"><use href="#folder"/></svg>
<div class="a nm" style="left:628px;top:436px">Barone LLC.</div>
<svg class="a" style="left:773px;top:346px" width="72" height="90"><use href="#folder"/></svg>
<div class="a nm" style="left:739px;top:436px">Barone LLC.</div>
<svg class="a" style="left:884px;top:346px" width="72" height="90"><use href="#folder"/></svg>
<div class="a nm" style="left:850px;top:436px">Big Kahuna<br>Burger Ltd.</div>
<svg class="a" style="left:995px;top:346px" width="72" height="90"><use href="#folder"/></svg>
<div class="a nm" style="left:961px;top:436px">Barone LLC.</div>
<svg class="a" style="left:1106px;top:346px" width="72" height="90"><use href="#folder"/></svg>
<div class="a nm" style="left:1072px;top:436px">Acme Co.</div>
<svg class="a" style="left:1217px;top:346px" width="72" height="90"><use href="#folder"/></svg>
<div class="a nm" style="left:1183px;top:436px">Abstergo<br>Ltd.</div>
<svg class="a" style="left:1328px;top:346px" width="72" height="90"><use href="#folder"/></svg>
<div class="a nm" style="left:1294px;top:436px">Abstergo<br>Ltd.</div>
<svg class="a" style="left:440px;top:570px" width="72" height="86"><use href="#f_doc"/></svg>
<div class="a nm" style="left:406px;top:658px">tinypanda<br>866</div>
<svg class="a" style="left:545px;top:570px" width="72" height="86"><use href="#f_xls"/></svg>
<div class="a nm" style="left:511px;top:658px">lazymeercat<br>616</div>
<svg class="a" style="left:650.4px;top:570px" width="72" height="86"><use href="#f_ppt"/></svg>
<div class="a nm" style="left:616.4px;top:658px">tinyleopard<br>720</div>
<svg class="a" style="left:755.9px;top:570px" width="72" height="86"><use href="#f_xls"/></svg>
<div class="a nm" style="left:721.9px;top:658px">sadwolf227</div>
<svg class="a" style="left:861px;top:570px" width="72" height="86"><use href="#f_doc"/></svg>
<div class="a nm" style="left:827px;top:658px">blueladybug<br>463</div>
<svg class="a" style="left:984.3px;top:570px" width="72" height="86"><use href="#f_pdf"/></svg>
<div class="a nm" style="left:950.3px;top:658px">beautifulmouse112</div>
<svg class="a" style="left:1107.6px;top:570px" width="72" height="86"><use href="#f_doc"/></svg>
<div class="a nm" style="left:1073.6px;top:658px">brownfish<br>258</div>
<svg class="a" style="left:1213px;top:570px" width="72" height="86"><use href="#f_xls"/></svg>
<div class="a nm" style="left:1179px;top:658px">whiteswan<br>331</div>
<svg class="a" style="left:1323px;top:570px" width="72" height="86"><use href="#f_pdf"/></svg>
<div class="a nm" style="left:1289px;top:658px">brownbear646</div>
<svg class="a" style="left:440px;top:718px" width="72" height="86"><use href="#f_pdf"/></svg>
<div class="a nm" style="left:406px;top:806px">sadwolf227</div>
<svg class="a" style="left:556px;top:718px" width="72" height="86"><use href="#f_xls"/></svg>
<div class="a nm" style="left:522px;top:806px">happysnake<br>594</div>
<svg class="a" style="left:672px;top:718px" width="72" height="86"><use href="#f_doc"/></svg>
<div class="a nm" style="left:638px;top:806px">bluebear234</div>
<svg class="a" style="left:788px;top:718px" width="72" height="86"><use href="#f_xls"/></svg>
<div class="a nm" style="left:754px;top:806px">yellowmouse<br>215</div>
<svg class="a" style="left:904px;top:718px" width="72" height="86"><use href="#f_txt"/></svg>
<div class="a nm" style="left:870px;top:806px">sadpanda176</div>
<svg class="a" style="left:1020px;top:718px" width="72" height="86"><use href="#f_txt"/></svg>
<div class="a nm" style="left:986px;top:806px">bigbear444</div>
<div id="sb"></div>
</body></html>
